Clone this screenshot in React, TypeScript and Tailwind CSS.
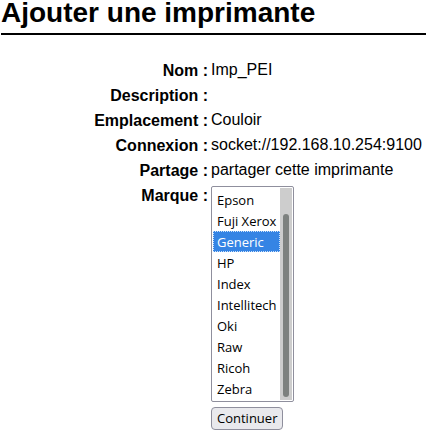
import { useState, type FormEvent, type ReactNode } from 'react';

const details = [
  { label: 'Nom', value: 'Imp_PEI' },
  { label: 'Description', value: '' },
  { label: 'Emplacement', value: 'Couloir' },
  { label: 'Connexion', value: 'socket://192.168.10.254:9100' },
  { label: 'Partage', value: 'partager cette imprimante' },
];

const makes = ['Epson', 'Fuji Xerox', 'Generic', 'HP', 'Index', 'Intellitech', 'Oki', 'Raw', 'Ricoh', 'Zebra'];

function Row({ label, htmlFor, children }: { label: string; htmlFor?: string; children: ReactNode }) {
  return (
    <tr className="h-[25px] align-top">
      <th scope="row" className="w-[207px] pt-px text-right font-bold">
        {htmlFor ? <label htmlFor={htmlFor}>{label} :</label> : <>{label} :</>}
      </th>
      <td className="pl-[3px]">{children}</td>
    </tr>
  );
}

export default function App() {
  const [make, setMake] = useState('Generic');

  return (
    <main className="min-h-screen bg-white pl-px font-['Liberation_Sans',Arial,sans-serif] text-base leading-6 text-black">
      <h1 className="h-[35px] border-b-2 border-black text-[28px] leading-[26px] font-bold">Ajouter une imprimante</h1>
      <form className="pt-[23px]" onSubmit={(event: FormEvent) => event.preventDefault()}>
        <table className="w-full table-fixed border-collapse">
          <tbody>
            {details.map(({ label, value }) => (
              <Row key={label} label={label}>
                {value}
              </Row>
            ))}
            <Row label="Marque" htmlFor="make">
              <div className="mt-[3px] flex w-[83px] rounded-[2px] border border-[#8f8f9d] bg-white p-px">
                <select
                  id="make"
                  size={10}
                  value={make}
                  onChange={(event) => setMake(event.target.value)}
                  className="block h-[212px] min-w-0 flex-1 appearance-none overflow-hidden bg-none py-px font-['Open_Sans','Noto_Sans',sans-serif] text-[13px] leading-[21px] outline-none"
                >
                  {makes.map((name) => (
                    <option
                      key={name}
                      value={name}
                      className="h-[21px] min-h-0 border border-transparent px-[3px] pt-px pb-0 leading-[18px] checked:border-dotted checked:border-[#cfe3fa] checked:bg-[#3584e4] checked:bg-[linear-gradient(#3584e4,#3584e4)] checked:text-white"
                    >
                      {name}
                    </option>
                  ))}
                </select>
                <div aria-hidden="true" className="flex w-3 justify-center bg-[#cdcdcd] pt-[26px] pb-[3px]">
                  <div className="w-[6px] rounded-full bg-[#7d817f]" />
                </div>
              </div>
            </Row>
            <tr className="align-top">
              <td />
              <td className="pt-[5px] pl-[3px]">
                <button
                  type="submit"
                  className="block h-[23px] rounded-[4px] border border-[#8f8f9d] bg-[#e9e9ed] px-[5px] font-['Open_Sans','Noto_Sans',sans-serif] text-[13px] leading-[21px]"
                >
                  Continuer
                </button>
              </td>
            </tr>
          </tbody>
        </table>
      </form>
    </main>
  );
}
